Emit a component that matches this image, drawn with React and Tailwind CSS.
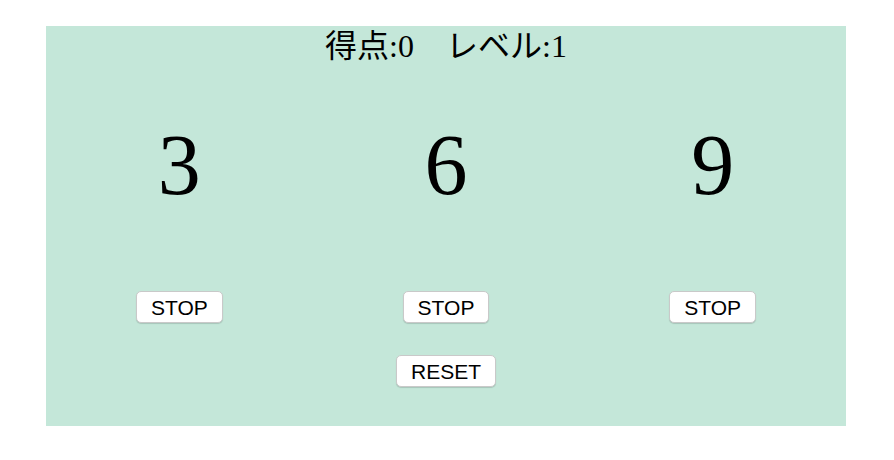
import { useState } from "react";

const serif = { fontFamily: '"Liberation Serif", "Noto Sans CJK JP", serif' };

function StopButton({ onClick, label }) {
  return (
    <button
      onClick={onClick}
      className="h-[32px] px-[14px] bg-white border border-[#c9c9c9] rounded-[5px] shadow-[0_1px_1px_rgba(0,0,0,0.15)] text-[21px] leading-none text-black font-['Liberation_Sans',Arial,sans-serif] cursor-pointer"
    >
      {label}
    </button>
  );
}

export default function App() {
  const [nums] = useState([3, 6, 9]);
  const [score] = useState(0);
  const [level] = useState(1);

  return (
    <div className="min-h-screen bg-white pt-[26px]">
      <div className="ml-[46px] w-[800px] h-[400px] bg-[#c4e7d9] flex flex-col items-center">
        <h1 className="h-[40px] text-[32px] leading-[40px] font-normal text-black" style={serif}>
          得点:{score}　レベル:{level}
        </h1>

        <div className="grid grid-cols-3 w-full mt-[56px]">
          {nums.map((n, i) => (
            <div key={i} className="flex flex-col items-center">
              <div className="h-[86px] text-[86px] leading-[86px] text-black" style={serif}>
                {n}
              </div>
              <div className="mt-[83px]">
                <StopButton label="STOP" />
              </div>
            </div>
          ))}
        </div>

        <div className="mt-[32px]">
          <StopButton label="RESET" />
        </div>
      </div>
    </div>
  );
}
